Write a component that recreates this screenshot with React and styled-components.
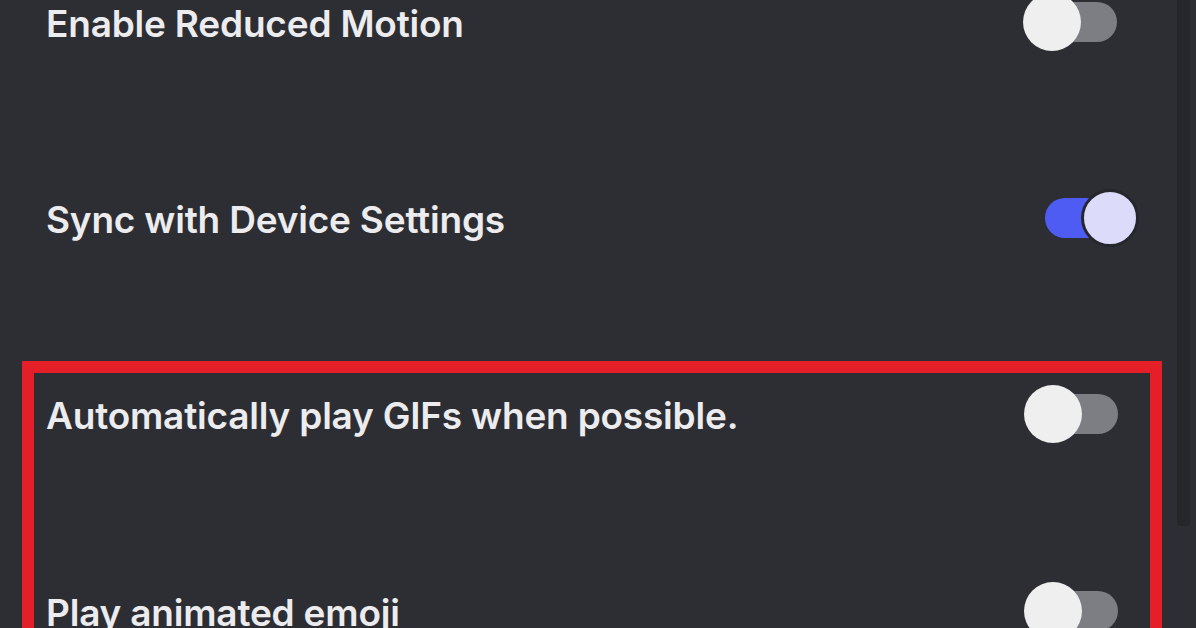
import React from "react";
import styled, { createGlobalStyle } from "styled-components";

const GlobalStyle = createGlobalStyle`
  html, body {
    margin: 0;
    padding: 0;
    background: #2d2e33;
    overflow: hidden;
  }
`;

const Screen = styled.div`
  display: flex;
  align-items: flex-start;
  width: 1196px;
  height: 628px;
  background: #2d2e33;
  overflow: hidden;
  font-family: Inter, "Noto Sans", sans-serif;
`;

const Content = styled.div`
  flex: 1;
  display: flex;
  flex-direction: column;
  margin-top: -8px;
`;

const ScrollTrack = styled.div`
  width: 16px;
  padding-right: 3px;
`;

const ScrollThumb = styled.div`
  width: 13px;
  height: 526px;
  background: #26272b;
  border-radius: 0 0 3px 3px;
`;

const Row = styled.div`
  display: flex;
  flex-shrink: 0;
  align-items: center;
  justify-content: space-between;
  height: 60px;
  padding: 0 ${(p) => p.$right ?? 60}px 0 ${(p) => p.$left ?? 46}px;
  margin-bottom: ${(p) => p.$gap ?? 0}px;
`;

const Label = styled.span`
  color: #ececee;
  font-size: 37px;
  font-weight: 600;
  line-height: 1.2;
  letter-spacing: -0.2px;
  padding-top: 4px;
  white-space: nowrap;
`;

const Highlight = styled.div`
  flex-shrink: 0;
  margin: 0 15px 0 22px;
  border: 12px solid #e51f28;
  border-bottom: none;
  padding-top: 11px;
  height: 400px;
`;

const Switch = styled.div`
  position: relative;
  width: 94px;
  height: 58px;
  margin-right: ${(p) => (p.$on ? -22 : 0)}px;
`;

const SwitchTrack = styled.div`
  position: absolute;
  top: 9px;
  left: ${(p) => (p.$on ? 0 : 14)}px;
  right: ${(p) => (p.$on ? 14 : 0)}px;
  height: 40px;
  border-radius: 20px;
  background: ${(p) => (p.$on ? "#4f5cf3" : "#7c7e84")};
`;

const SwitchKnob = styled.div`
  position: absolute;
  top: 0;
  left: ${(p) => (p.$on ? 36 : 0)}px;
  width: 58px;
  height: 58px;
  box-sizing: border-box;
  border-radius: 50%;
  background: ${(p) => (p.$on ? "#dcdcfa" : "#efeff0")};
  border: ${(p) => (p.$on ? "3px solid #26272d" : "none")};
`;

const Toggle = ({ on }) => (
  <Switch $on={on}>
    <SwitchTrack $on={on} />
    <SwitchKnob $on={on} />
  </Switch>
);

const App = () => (
  <>
    <GlobalStyle />
    <Screen>
      <Content>
        <Row $gap={136}>
          <Label>Enable Reduced Motion</Label>
          <Toggle />
        </Row>
        <Row $gap={113}>
          <Label>Sync with Device Settings</Label>
          <Toggle on />
        </Row>
        <Highlight>
          <Row $left={12} $right={32} $gap={137}>
            <Label>Automatically play GIFs when possible.</Label>
            <Toggle />
          </Row>
          <Row $left={12} $right={32}>
            <Label>Play animated emoji</Label>
            <Toggle />
          </Row>
        </Highlight>
      </Content>
      <ScrollTrack>
        <ScrollThumb />
      </ScrollTrack>
    </Screen>
  </>
);

export default App;
